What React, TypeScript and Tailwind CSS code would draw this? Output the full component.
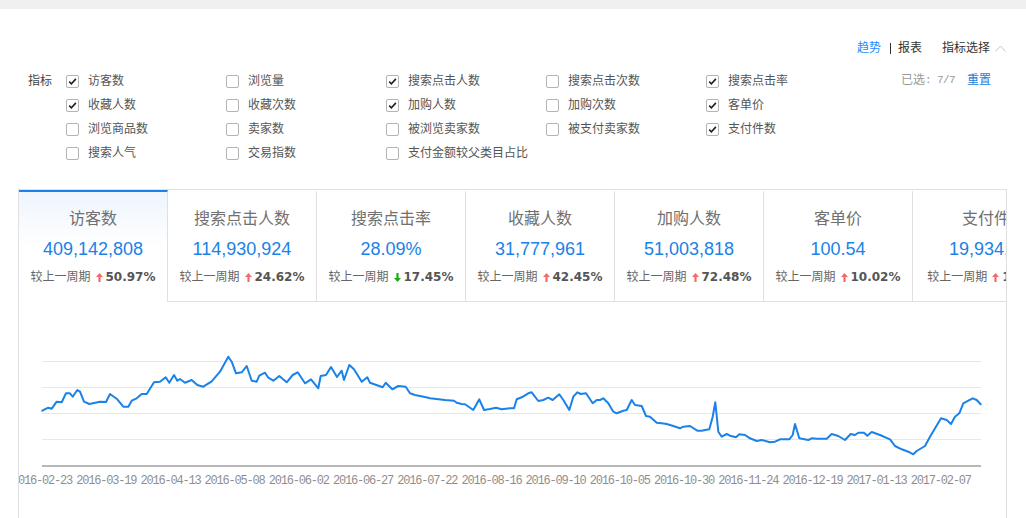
import React from "react";

type Metric = { label: string; checked: boolean };

const metricRows: Metric[][] = [
    [
        { label: "访客数", checked: true },
        { label: "浏览量", checked: false },
        { label: "搜索点击人数", checked: true },
        { label: "搜索点击次数", checked: false },
        { label: "搜索点击率", checked: true },
    ],
    [
        { label: "收藏人数", checked: true },
        { label: "收藏次数", checked: false },
        { label: "加购人数", checked: true },
        { label: "加购次数", checked: false },
        { label: "客单价", checked: true },
    ],
    [
        { label: "浏览商品数", checked: false },
        { label: "卖家数", checked: false },
        { label: "被浏览卖家数", checked: false },
        { label: "被支付卖家数", checked: false },
        { label: "支付件数", checked: true },
    ],
    [
        { label: "搜索人气", checked: false },
        { label: "交易指数", checked: false },
        { label: "支付金额较父类目占比", checked: false },
    ],
];

interface Tab {
    title: string;
    value: string;
    pct: string;
    up: boolean;
}

const tabs: Tab[] = [
    { title: "访客数", value: "409,142,808", pct: "50.97%", up: true },
    { title: "搜索点击人数", value: "114,930,924", pct: "24.62%", up: true },
    { title: "搜索点击率", value: "28.09%", pct: "17.45%", up: false },
    { title: "收藏人数", value: "31,777,961", pct: "42.45%", up: true },
    { title: "加购人数", value: "51,003,818", pct: "72.48%", up: true },
    { title: "客单价", value: "100.54", pct: "10.02%", up: true },
    { title: "支付件数", value: "19,934,562", pct: "113.27%", up: true },
];

const dates = [
    "2016-02-23", "2016-03-19", "2016-04-13", "2016-05-08", "2016-06-02",
    "2016-06-27", "2016-07-22", "2016-08-16", "2016-09-10", "2016-10-05",
    "2016-10-30", "2016-11-24", "2016-12-19", "2017-01-13", "2017-02-07",
];

// page coordinates of the trend line
const points =
    "42.3,410.7 48.3,407.7 51.7,408.7 56.7,401.7 61.7,402.3 66,393.3 70,393.3 72.7,396.7 77.3,390 80,391.7 84,401.7 89.3,404 100,401.7 106,402 110,394 117.3,399.3 123.3,406.7 128.3,406.7 131.7,400.7 136.7,398.3 141.7,394 146.7,394 154,382.3 160,381.7 165.7,377.3 169.3,382.7 174,375 177.3,380.7 180,379 185,382.7 191.7,380 197.3,385 203.3,386.7 211.7,381.3 220,371.7 228.3,356.7 231.7,361.7 236,373.3 241.7,372.3 246.7,366 251.7,380.7 256.7,381.7 259.3,375.7 265,372.7 268.3,377.7 273.3,380.7 279.3,376 286.7,382.3 292.7,375 297.7,372.3 305,383.3 311,379.3 318.3,388.3 320.7,376 326,375 331,367 337,377 341.7,370.7 344,380 349.3,365 354,369.3 361.7,381.7 367.3,377.3 370,382.7 382.7,387.3 385.7,382.7 392.3,389.3 398.3,386 405.7,386.7 410,393.3 415,395 426,397.3 430,398.3 445,400 454,400.7 456.7,402.7 461.7,404 465,404.3 473.3,410 479.3,399.3 484,410 490,409 496,407.7 501.7,409.3 510,408.3 514,408.3 516.7,399.3 521.7,397.3 528.3,393.3 531.7,392.3 538.3,401 543.3,400 548.3,397.7 552.7,400 559.3,394.3 563.3,400 569.3,410 573.3,396.7 577.3,392.3 580.7,394 586,393.3 592.7,403.3 596.7,400 600,400 603.3,398.3 608.3,403.3 613.3,411.7 616.7,413.3 623.3,410.7 626.7,410 631.7,400 635,405 641.7,406 646,416 650,416.7 656.7,422.7 661.7,423.3 666.7,424 673.3,426 680,428.3 683.3,426.7 690,426 697.3,430.7 701.7,430.7 709.3,429.3 712.7,416.7 715.3,402.3 718.3,431.7 721.7,436.7 726.7,434 730,435.7 736,437.3 739.3,434.3 745,435 750,438.3 756.7,441 761.7,440 770,442.3 775,441.7 780,439.3 789.3,439.3 792.7,435 795,424 799.3,438.3 808.3,440 811.7,438.3 816.7,438.7 826.7,438.7 831.7,434 838.3,436 845,440 850.7,434 855,435 858.3,432.7 864,432.7 867.3,435.7 871.7,432 880,435 890,439.3 895,446 901.7,449.3 908.3,451.7 913.3,454.3 916.7,451 925,446 930,436.7 941,418.3 946.7,420 951,424 955,416.7 959.3,413.3 963.3,403.3 968.3,400.7 972.7,398.3 976.7,400 980.7,404.3";

function CheckBox({ checked }: { checked: boolean }) {
    return (
        <span className="w-[13px] h-[13px] border border-[#b4b4b4] rounded-[2px] bg-white flex items-center justify-center shrink-0">
            {checked && (
                <svg width="9" height="9" viewBox="0 0 9 9">
                    <path d="M1.2 4.6 L3.4 6.9 L7.9 1.9" fill="none" stroke="#222" strokeWidth="1.6" />
                </svg>
            )}
        </span>
    );
}

function Arrow({ up }: { up: boolean }) {
    return (
        <svg width="7" height="9" viewBox="0 0 7 9" className={up ? "" : "rotate-180"}>
            <path d="M3.5 0 L7 4 L4.6 4 L4.6 9 L2.4 9 L2.4 4 L0 4 Z" fill={up ? "#f46a6a" : "#1aab1a"} />
        </svg>
    );
}

export default function App() {
    return (
        <div className="w-[1026px] h-[518px] overflow-hidden bg-white text-[12px] text-[#555] font-['Liberation_Sans','Noto_Sans_CJK_SC',sans-serif]">
            <div className="h-[9px] bg-[#f0f0f0]" />

            {/* top links */}
            <div className="mt-[31px] h-[16px] flex items-center justify-end pr-[20px] leading-[16px]">
                <span className="text-[#1a8cff]">趋势</span>
                <span className="ml-[9px] w-px h-[11px] bg-[#333]" />
                <span className="ml-[7px] text-[#333]">报表</span>
                <span className="ml-[20px] text-[#333]">指标选择</span>
                <svg width="11" height="7" viewBox="0 0 11 7" className="ml-[5px]">
                    <path d="M0.5 6.5 L5.5 1 L10.5 6.5" fill="none" stroke="#c4c4c4" strokeWidth="1" />
                </svg>
            </div>

            {/* metric filter */}
            <div className="mt-[13px] flex pl-[28px] pr-[35px]">
                <div className="w-[38px] h-[24px] leading-[24px] text-[#444]">指标</div>
                <div className="flex flex-col">
                    {metricRows.map((row, i) => (
                        <div key={i} className="flex h-[24px]">
                            {row.map((m) => (
                                <div key={m.label} className="w-[160px] flex items-center">
                                    <CheckBox checked={m.checked} />
                                    <span className="ml-[9px] leading-[24px]">{m.label}</span>
                                </div>
                            ))}
                        </div>
                    ))}
                </div>
                <div className="ml-auto h-[22px] flex items-center">
                    <span className="text-[#999]">已选</span>
                    <span className="text-[#999] text-[11px] tracking-[-0.6px] font-['Liberation_Mono',monospace]">: 7/7</span>
                    <span className="ml-[12px] text-[#1a7fd9]">重置</span>
                </div>
            </div>

            {/* trend panel */}
            <div className="mt-[24px] ml-[18px] w-[989px] h-[340px] border-t border-l border-r border-[#e0e0e0] overflow-hidden">
                <div className="flex">
                    {tabs.map((t, i) => {
                        const active = i === 0;
                        const last = i === tabs.length - 1;
                        return (
                            <div
                                key={t.title}
                                className={
                                    active
                                        ? "w-[149px] shrink-0 h-[112px] border-t-2 border-t-[#1a82e8] border-r border-r-[#e0e0e0] bg-gradient-to-b from-[#eef5fd] via-white to-white flex flex-col items-center pt-[17px]"
                                        : last
                                            ? "w-[163px] shrink-0 h-[112px] border-t-2 border-t-white border-r border-r-[#e0e0e0] border-b border-b-[#e0e0e0] bg-white flex flex-col items-center pt-[17px]"
                                            : "w-[149px] shrink-0 h-[112px] border-t-2 border-t-white border-r border-r-[#e0e0e0] border-b border-b-[#e0e0e0] bg-white flex flex-col items-center pt-[17px]"
                                }
                            >
                                <div className="text-[16px] leading-[20px] text-[#707070] whitespace-nowrap">{t.title}</div>
                                <div className="mt-[8px] text-[18px] leading-[24px] text-[#1a82e8] whitespace-nowrap">{t.value}</div>
                                <div className="mt-[8px] flex items-center h-[16px] whitespace-nowrap">
                                    <span className="text-[#666]">较上一周期</span>
                                    <span className="ml-[5px] flex items-center"><Arrow up={t.up} /></span>
                                    <span className="ml-[3px] font-bold text-[#555] font-['DejaVu_Sans',sans-serif]">{t.pct}</span>
                                </div>
                            </div>
                        );
                    })}
                </div>

                <svg width="987" height="216" viewBox="19 302 987 216" className="block">
                    {[361, 387, 413, 439].map((y) => (
                        <line key={y} x1="42" x2="981" y1={y + 0.5} y2={y + 0.5} stroke="#e8e8e8" strokeWidth="1" />
                    ))}
                    <line x1="42" x2="981" y1="466" y2="466" stroke="#b8b8b8" strokeWidth="2" />
                    <polyline points={points} fill="none" stroke="#1a82e8" strokeWidth="2" strokeLinejoin="round" strokeLinecap="round" />
                    {dates.map((d, i) => (
                        <text
                            key={d}
                            x={42 + 64.2 * i}
                            y="484"
                            textAnchor="middle"
                            fontSize="12"
                            letterSpacing="-1.2"
                            fill="#8e8e8e"
                            fontFamily="Liberation Mono, monospace"
                        >
                            {d}
                        </text>
                    ))}
                </svg>
            </div>
        </div>
    );
}
